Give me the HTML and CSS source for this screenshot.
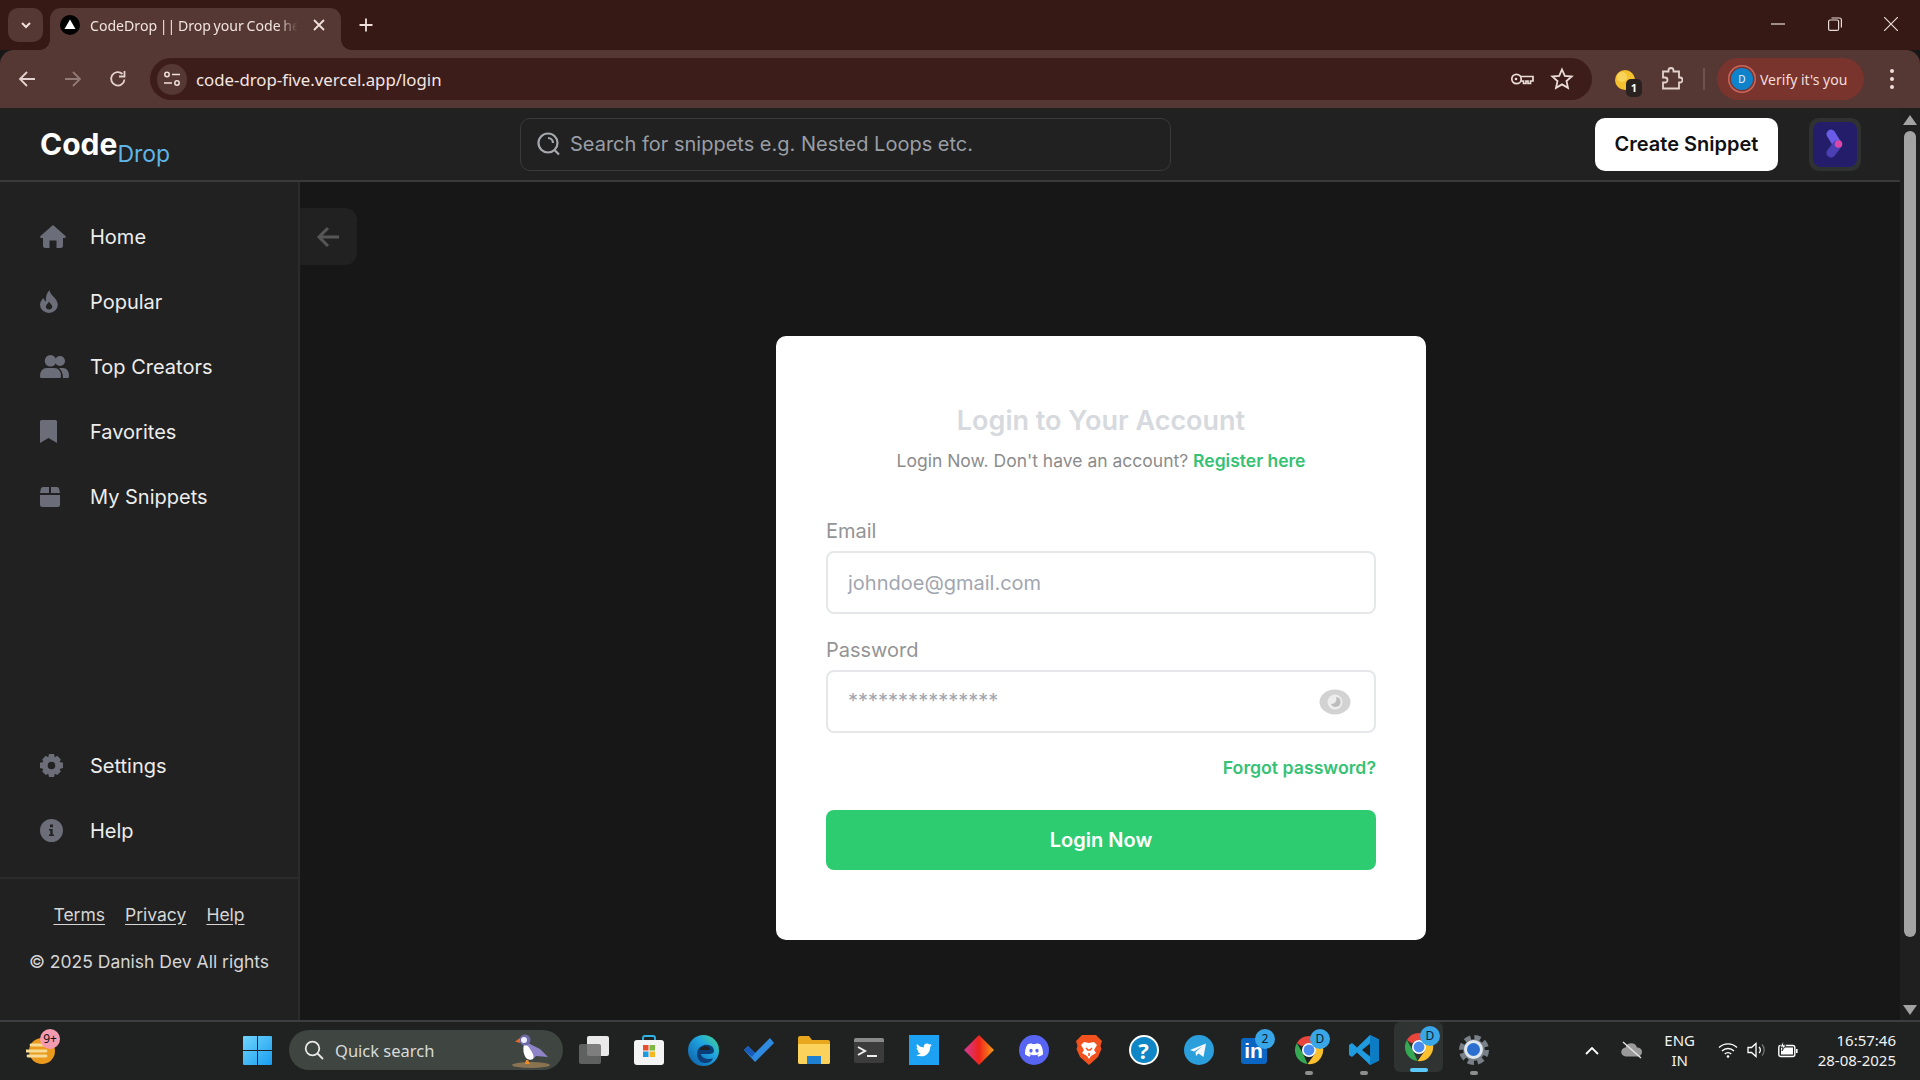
FILE: index.html
```html
<!DOCTYPE html>
<html lang="en">
<head>
<meta charset="utf-8">
<title>CodeDrop || Drop your Code here</title>
<link rel="stylesheet" href="styles.css">
</head>
<body>
<svg class="defs" width="0" height="0" aria-hidden="true">
  <defs>
    <symbol id="chrome" viewBox="0 0 32 32">
      <path d="M16 1A15 15 0 0 1 29 8.500L16 8.500L8 12L3 8.500A15 15 0 0 1 16 1Z" fill="#e8453c"/>
      <path d="M3 8.500L9.500 19.800L14.500 31A15 15 0 0 1 3 8.500Z" fill="#34a853"/>
      <path d="M29 8.500A15 15 0 0 1 14.500 31L22.500 19.800L23 11Z" fill="#fbc02d"/>
      <circle cx="16" cy="16" r="7.500" fill="#fff"/>
      <circle cx="16" cy="16" r="5.800" fill="#4a8cf0"/>
    </symbol>
    <symbol id="gearshape" viewBox="0 0 32 32">
      <circle cx="16" cy="16" r="11.500"/>
      <circle cx="16" cy="16" r="13.500" fill="none" stroke="currentColor" stroke-width="5" stroke-dasharray="6.600 4"/>
    </symbol>
  </defs>
</svg>

<header class="tabstrip">
  <button class="tab-search"><svg width="14" height="14" viewBox="0 0 14 14"><path d="M3 5l4 4 4-4" fill="none" stroke="#f0e0dc" stroke-width="2"/></svg></button>
  <div class="tab">
    <svg class="favicon" width="20" height="20" viewBox="0 0 20 20"><circle cx="10" cy="10" r="10" fill="#000"/><path d="M10 4.500L15.500 14H4.500Z" fill="#fff"/></svg>
    <span class="tab-title">CodeDrop || Drop your Code he</span>
    <svg class="tab-close" width="14" height="14" viewBox="0 0 14 14"><path d="M2 2l10 10M12 2L2 12" stroke="#f0e0dc" stroke-width="1.800"/></svg>
  </div>
  <svg class="new-tab" width="16" height="16" viewBox="0 0 16 16"><path d="M8 1.500v13M1.500 8h13" stroke="#f0e0dc" stroke-width="1.800"/></svg>
  <div class="window-controls">
    <svg width="14" height="14" viewBox="0 0 14 14"><path d="M0 7h14" stroke="#e8dcd8" stroke-width="1.200"/></svg>
    <svg width="14" height="14" viewBox="0 0 14 14"><rect x=".6" y="3" width="10" height="10.400" rx="1.500" fill="none" stroke="#e8dcd8" stroke-width="1.200"/><path d="M3.500 1H11.500Q13.400 1 13.400 3V10.500" fill="none" stroke="#e8dcd8" stroke-width="1.200"/></svg>
    <svg width="14" height="14" viewBox="0 0 14 14"><path d="M0 0l14 14M14 0L0 14" stroke="#e8dcd8" stroke-width="1.200"/></svg>
  </div>
</header>

<nav class="toolbar">
  <div class="nav-buttons">
    <svg width="18" height="18" viewBox="0 0 18 18"><path d="M17 9H2M9 2L2 9l7 7" fill="none" stroke="#e4d2ce" stroke-width="1.800"/></svg>
    <svg width="18" height="18" viewBox="0 0 18 18"><path d="M1 9h15M9 2l7 7-7 7" fill="none" stroke="#927a76" stroke-width="1.800"/></svg>
    <svg width="18" height="18" viewBox="0 0 18 18"><path d="M15.500 9.500A6.700 6.700 0 1 1 13.500 4" fill="none" stroke="#e4d2ce" stroke-width="1.800"/><path d="M15.500 1v5.500H10" fill="none" stroke="#e4d2ce" stroke-width="1.800"/></svg>
  </div>
  <div class="address">
    <span class="site-info"><svg width="18" height="18" viewBox="0 0 18 18"><g fill="none" stroke="#f0e0dc" stroke-width="1.500"><circle cx="4" cy="4.500" r="2.200"/><path d="M9 4.500h8M1 13h8"/><circle cx="14" cy="13" r="2.200"/></g></svg></span>
    <span class="url">code-drop-five.vercel.app/login</span>
    <svg class="addr-icon" width="24" height="24" viewBox="0 0 24 24"><g fill="none" stroke="#ecdcd8" stroke-width="1.700"><circle cx="6.500" cy="12" r="4.700"/><path d="M11 9.500h12v4.500h-2.500v2.500h-2.500v-2.500h-2v2.500h-2.500v-2.500H11"/></g><circle cx="6" cy="12" r="1.300" fill="#ecdcd8"/></svg>
    <svg class="addr-icon" width="24" height="24" viewBox="0 0 24 24"><path d="M12 2.500l2.800 6.300 6.900.7-5.200 4.600 1.500 6.800-6-3.500-6 3.500 1.500-6.800-5.200-4.600 6.900-.7Z" fill="none" stroke="#ecdcd8" stroke-width="1.800"/></svg>
  </div>
  <div class="ext ext-first">
    <svg width="34" height="36" viewBox="0 0 34 36"><circle cx="17" cy="19" r="10" fill="#f5c12e"/><circle cx="14" cy="16" r="5" fill="#f9d45a"/></svg>
    <span class="ext-badge">1</span>
  </div>
  <div class="ext">
    <svg width="24" height="24" viewBox="0 0 24 24"><path d="M4 4.500h5.500V3.500a2.500 2.500 0 0 1 5 0v1H20v6h1a2.500 2.500 0 0 1 0 5h-1v6H4v-6h2a2.500 2.500 0 0 0 0-5H4Z" fill="none" stroke="#e4d2ce" stroke-width="1.800"/></svg>
  </div>
  <span class="toolbar-sep"></span>
  <div class="verify">
    <span class="verify-avatar">D</span>
    <span>Verify it's you</span>
  </div>
  <div class="menu-dots"><i></i><i></i><i></i></div>
</nav>

<div class="viewport">
  <div class="page">
    <header class="site-header">
      <a class="logo"><b>Code</b><span>Drop</span></a>
      <div class="search">
        <svg width="26" height="26" viewBox="0 0 26 26"><circle cx="12" cy="12" r="9.500" fill="none" stroke="#a5a9ad" stroke-width="2.200"/><path d="M12 7a5 5 0 0 1 5 5M18.500 19l4.500 4.500" fill="none" stroke="#a5a9ad" stroke-width="2.200"/></svg>
        <span>Search for snippets e.g. Nested Loops etc.</span>
      </div>
      <button class="create">Create Snippet</button>
      <div class="avatar-frame">
        <div class="avatar">
          <svg width="20" height="30" viewBox="0 0 20 30"><path d="M6 5l6 10" stroke="#6a5ce6" stroke-width="9" stroke-linecap="round"/><path d="M12 16L6 24" stroke="#4b3fb4" stroke-width="9" stroke-linecap="round"/><circle cx="13.500" cy="15" r="3.800" fill="#d948a8"/></svg>
        </div>
      </div>
    </header>
    <div class="body-row">
      <aside class="sidebar">
        <ul class="side-nav">
          <li><span class="side-icon"><svg width="26" height="23" viewBox="0 0 26 23"><path d="M13 0L25.500 11Q26.500 13 24.500 13H23V20.500Q23 23 20.500 23H16.500V15.500H9.500V23H5.500Q3 23 3 20.500V13H1.500Q-.5 13 .5 11Z"/></svg></span>Home</li>
          <li><span class="side-icon"><svg width="18" height="23" viewBox="0 0 18 23"><path fill-rule="evenodd" d="M9.500 0C10 4 13 5.500 15.500 9C17 11 17.800 13 17.800 14.800A8.900 8.200 0 0 1 0 14.800C0 12 1.800 9.500 3.500 8C4 9.800 5 11 6 11.500C5.500 7 6.500 3 9.500 0ZM9 11.500C8 13.500 5.800 14.800 5.800 16.800A3.300 3.300 0 0 0 12.300 16.800C12.300 14.800 10 13.500 9 11.500Z"/></svg></span>Popular</li>
          <li><span class="side-icon"><svg width="29" height="23" viewBox="0 0 29 23"><circle cx="20" cy="6" r="5"/><path d="M19 13h4Q29 13 29 21.500 29 23 27.500 23H23Q23 16.500 19 13Z"/><circle cx="10.500" cy="5.800" r="5.800"/><path d="M7 13h7Q21 13 21 21.500 21 23 19.500 23H1.500Q0 23 0 21.500 0 13 7 13Z"/></svg></span>Top Creators</li>
          <li><span class="side-icon"><svg width="17" height="23" viewBox="0 0 17 23"><path d="M0 1.500Q0 0 1.500 0H15.500Q17 0 17 1.500V23L8.500 18 0 23Z"/></svg></span>Favorites</li>
          <li><span class="side-icon"><svg width="20" height="20" viewBox="0 0 20 20"><path d="M3 0H9V6H0L.8 2Q1.400 0 3 0ZM11 0H17Q18.600 0 19.200 2L20 6H11ZM0 8H20V17.500Q20 20 17.500 20H2.500Q0 20 0 17.500Z"/></svg></span>My Snippets</li>
        </ul>
        <ul class="side-nav side-nav-bottom">
          <li><span class="side-icon"><svg width="23" height="23" viewBox="0 0 23 23"><path fill-rule="evenodd" d="M9 0H14L14.800 3.200 17.300 1.800 20.800 5.400 19.600 7.900 23 8.800V14L19.600 14.900 20.800 17.500 17.300 21.100 14.800 19.800 14 23H9L8.200 19.800 5.700 21.100 2.200 17.500 3.400 14.900 0 14V8.800L3.400 7.900 2.200 5.400 5.700 1.800 8.200 3.200ZM11.500 7.700A3.800 3.800 0 1 0 11.500 15.300 3.800 3.800 0 1 0 11.500 7.700Z"/></svg></span>Settings</li>
          <li><span class="side-icon"><svg width="23" height="23" viewBox="0 0 23 23"><path fill-rule="evenodd" d="M11.500 0A11.500 11.500 0 1 1 11.500 23 11.500 11.500 0 1 1 11.500 0ZM10 5.500V8.200H13V5.500ZM9 10V11.500H10.300V15.500H9V17H14V15.500H12.700V10Z"/></svg></span>Help</li>
        </ul>
        <footer class="side-footer">
          <div class="side-links"><a>Terms</a><a>Privacy</a><a>Help</a></div>
          <p>© 2025 Danish Dev All rights</p>
        </footer>
      </aside>
      <main class="main">
        <button class="back"><svg width="24" height="22" viewBox="0 0 24 22"><path d="M23 11H3M12 2L3 11l9 9" fill="none" stroke="#565656" stroke-width="3"/></svg></button>
        <section class="card">
          <h1>Login to Your Account</h1>
          <p class="sub">Login Now. Don't have an account? <a>Register here</a></p>
          <label class="field-label">Email</label>
          <div class="input"><span class="placeholder">johndoe@gmail.com</span></div>
          <label class="field-label field-label-pw">Password</label>
          <div class="input input-pw">
            <span class="placeholder stars">***************</span>
            <svg width="32" height="26" viewBox="0 0 32 26"><ellipse cx="16" cy="13" rx="15.500" ry="12.500" fill="#d2d2d2"/><circle cx="16" cy="13" r="7.500" fill="#ededed"/><path d="M17 8A5 5 0 1 1 12 15 5 5 0 0 0 17 8Z" fill="#bdbdbd"/></svg>
          </div>
          <a class="forgot">Forgot password?</a>
          <button class="login">Login Now</button>
        </section>
      </main>
    </div>
  </div>
  <div class="scrollbar">
    <svg width="14" height="10" viewBox="0 0 14 10"><path d="M7 0l7 10H0Z" fill="#a3a3a3"/></svg>
    <span class="thumb"></span>
    <svg width="14" height="10" viewBox="0 0 14 10"><path d="M7 10L0 0h14Z" fill="#a3a3a3"/></svg>
  </div>
</div>

<footer class="taskbar">
  <div class="weather">
    <svg width="30" height="30" viewBox="0 0 30 30"><circle cx="16" cy="16" r="13" fill="#ec9a1e"/><path d="M0 16h20M5 10h16M2 21h18" stroke="#f5dc96" stroke-width="2.800" stroke-linecap="round"/></svg>
    <span class="weather-badge">9+</span>
  </div>
  <svg class="start" width="29" height="29" viewBox="0 0 29 29">
    <defs><linearGradient id="win" x1="0" y1="0" x2="1" y2="1"><stop offset="0" stop-color="#6fd6fb"/><stop offset="1" stop-color="#1a9cf0"/></linearGradient></defs>
    <path d="M1 0H14V14H0V1Q0 0 1 0ZM15 0H28Q29 0 29 1V14H15ZM0 15H14V29H1Q0 29 0 28ZM15 15H29V28Q29 29 28 29H15Z" fill="url(#win)"/>
  </svg>
  <div class="quick">
    <svg width="20" height="20" viewBox="0 0 20 20"><circle cx="8.500" cy="8.500" r="6.800" fill="none" stroke="#e8e8e8" stroke-width="1.800"/><path d="M13.500 13.500L19 19" stroke="#e8e8e8" stroke-width="1.800"/></svg>
    <span class="quick-text">Quick search</span>
    <svg class="puffin" width="42" height="36" viewBox="0 0 42 36"><ellipse cx="22" cy="33" rx="19" ry="3" fill="#8a7350"/><path d="M17 10L31 17 39 25 27 24Q23 29 20 27 15 22 16 14Z" fill="#8f84c8"/><path d="M15 12Q13 20 17 26 20 29 24 27 26 24 21 17 19 13 15 12Z" fill="#fff"/><circle cx="16" cy="8" r="5.500" fill="#6f6aa8"/><circle cx="15" cy="8" r="3" fill="#eef"/><path d="M11 6L6 9.500 11 11Z" fill="#e86a2a"/><path d="M17 28l-1 4h5l-2-4Z" fill="#ef8a2a"/></svg>
  </div>
  <div class="apps">
    <div class="app"><svg width="30" height="30" viewBox="0 0 30 30"><rect x="8" y="1" width="22" height="20" rx="2" fill="#e9e9e9"/><rect y="9" width="22" height="20" rx="2" fill="#6b6b6b" fill-opacity=".85"/></svg></div>
    <div class="app"><svg width="30" height="30" viewBox="0 0 30 30"><path d="M9 6V3Q9 1 11 1H19Q21 1 21 3V6" fill="none" stroke="#2fb4e8" stroke-width="1.800"/><rect y="5" width="30" height="25" rx="3" fill="#f4f4f4"/><rect x="9" y="10" width="5.500" height="5.500" fill="#e74f2c"/><rect x="15.500" y="10" width="5.500" height="5.500" fill="#7db842"/><rect x="9" y="16.500" width="5.500" height="5.500" fill="#1e9ae0"/><rect x="15.500" y="16.500" width="5.500" height="5.500" fill="#f5b922"/></svg></div>
    <div class="app"><svg width="31" height="31" viewBox="0 0 31 31"><defs><linearGradient id="edge" x1="0" y1="1" x2="1" y2="0"><stop offset="0" stop-color="#0c59a4"/><stop offset=".6" stop-color="#1fa4e0"/><stop offset="1" stop-color="#4ad98a"/></linearGradient></defs><circle cx="15.500" cy="15.500" r="15.500" fill="url(#edge)"/><path d="M16 10C22 9 26 12 26 16 26 18 24 19 21 19H13C13 22 17 24 21 24L25 23.500C23 28 17 29 13 27 8 24 8 15 12 12Z" fill="#0b3e78"/><path d="M12 14Q14 11 18 11 22 12 22 15H12Z" fill="#222"/></svg></div>
    <div class="app"><svg width="30" height="26" viewBox="0 0 30 26"><path d="M0 13L4 9 11 16 26 1 30 6 11 25Z" fill="#2e8be0"/><path d="M0 13L4 9 11 16 8 20Z" fill="#185ab8"/></svg></div>
    <div class="app"><svg width="32" height="28" viewBox="0 0 32 28"><path d="M0 2Q0 0 2 0H11L14 4H30Q32 4 32 6V26Q32 28 30 28H2Q0 28 0 26Z" fill="#e8a81e"/><path d="M0 8H32V26Q32 28 30 28H2Q0 28 0 26Z" fill="#fbd35c"/><rect x="9" y="20" width="14" height="8" fill="#1f7fd0"/></svg></div>
    <div class="app"><svg width="30" height="25" viewBox="0 0 30 25"><rect width="30" height="25" rx="2" fill="#3c3c3c"/><path d="M0 2Q0 0 2 0H28Q30 0 30 2V4H0Z" fill="#8a8a8a"/><path d="M4 9l7 4-7 4" fill="none" stroke="#eee" stroke-width="2"/><path d="M13 18h10" stroke="#eee" stroke-width="2"/></svg></div>
    <div class="app"><svg width="30" height="30" viewBox="0 0 30 30"><rect width="30" height="30" fill="#1da1f2"/><path transform="translate(7 7) scale(.66)" d="M23.950 4.570a10 10 0 0 1-2.820.77 4.960 4.960 0 0 0 2.160-2.720c-.950.550-2 .950-3.120 1.170a4.920 4.920 0 0 0-8.380 4.480C7.690 8.090 4.070 6.130 1.640 3.160a4.820 4.820 0 0 0-.670 2.480c0 1.710.870 3.210 2.190 4.100a4.900 4.900 0 0 1-2.230-.620v.060c0 2.390 1.700 4.380 3.950 4.830a4.900 4.900 0 0 1-2.210.080 4.930 4.930 0 0 0 4.600 3.420A9.870 9.870 0 0 1 0 19.540a14 14 0 0 0 7.560 2.210c9.050 0 14-7.500 14-13.980 0-.210 0-.420-.020-.630a9.940 9.940 0 0 0 2.460-2.550z" fill="#fff"/></svg></div>
    <div class="app"><svg width="30" height="30" viewBox="0 0 30 30"><defs><linearGradient id="dia" x1="0" y1="0" x2="1" y2="0"><stop offset="0" stop-color="#d03a9a"/><stop offset=".5" stop-color="#f0241c"/><stop offset="1" stop-color="#f69a18"/></linearGradient></defs><path d="M15 0L30 15 15 30 0 15Z" fill="url(#dia)"/></svg></div>
    <div class="app"><svg width="30" height="30" viewBox="0 0 30 30"><circle cx="15" cy="15" r="15" fill="#5865f2"/><path transform="translate(6 6) scale(.75)" d="M20.317 4.370a19.791 19.791 0 0 0-4.885-1.515.074.074 0 0 0-.079.037c-.21.375-.444.864-.608 1.250a18.270 18.270 0 0 0-5.487 0 12.640 12.640 0 0 0-.617-1.250.077.077 0 0 0-.079-.037A19.736 19.736 0 0 0 3.677 4.370a.07.07 0 0 0-.032.027C.533 9.046-.32 13.580.099 18.057a.082.082 0 0 0 .031.057 19.900 19.900 0 0 0 5.993 3.030.078.078 0 0 0 .084-.028c.462-.63.874-1.295 1.226-1.994a.076.076 0 0 0-.041-.106 13.107 13.107 0 0 1-1.872-.892.077.077 0 0 1-.008-.128 10.200 10.200 0 0 0 .372-.292.074.074 0 0 1 .077-.01c3.928 1.793 8.180 1.793 12.062 0a.074.074 0 0 1 .078.01c.12.098.246.198.373.292a.077.077 0 0 1-.006.127 12.299 12.299 0 0 1-1.873.892.077.077 0 0 0-.041.107c.36.698.772 1.362 1.225 1.993a.076.076 0 0 0 .084.028 19.839 19.839 0 0 0 6.002-3.030.077.077 0 0 0 .032-.054c.5-5.177-.838-9.674-3.549-13.660a.061.061 0 0 0-.031-.03zM8.020 15.330c-1.183 0-2.157-1.085-2.157-2.419 0-1.333.956-2.419 2.157-2.419 1.210 0 2.176 1.096 2.157 2.420 0 1.333-.956 2.418-2.157 2.418zm7.975 0c-1.183 0-2.157-1.085-2.157-2.419 0-1.333.955-2.419 2.157-2.419 1.210 0 2.176 1.096 2.157 2.420 0 1.333-.946 2.418-2.157 2.418z" fill="#fff"/></svg></div>
    <div class="app"><svg width="26" height="30" viewBox="0 0 26 30"><path d="M6 0H20L23 3 26 6 24.500 11 25.500 14 22 22 13 30 4 22 .5 14 1.500 11 0 6 3 3Z" fill="#f1521e"/><path d="M8 7L13 8 18 7 21 10 18 15 20 18 15 21 13 24 11 21 6 18 8 15 5 10Z" fill="#fff"/><path d="M10 13L12 15H14L16 13M13 18v3" stroke="#f1521e" stroke-width="1.500" fill="none"/></svg></div>
    <div class="app"><span class="help-icon">?</span></div>
    <div class="app"><svg width="30" height="30" viewBox="0 0 30 30"><circle cx="15" cy="15" r="15" fill="#2b9fdc"/><path d="M6 15L22 8.500 19.500 22 14.500 18.500 12 21 11.500 17 18 11.500 10 16.500Z" fill="#f2f8fc"/></svg></div>
    <div class="app"><span class="linkedin">in</span><span class="badge">2</span></div>
    <div class="app"><svg width="30" height="30"><use href="#chrome"/></svg><span class="badge">D</span><i class="run"></i></div>
    <div class="app"><svg width="30" height="30" viewBox="0 0 30 30"><path d="M21 0L30 4.500V25.500L21 30 8 17.500 3 22 0 20V10L3 8 8 12.500ZM21 8.500L13 15 21 21.500Z" fill="#1f9be0"/><path d="M21 0L30 4.500V25.500L21 30Z" fill="#0c7cc4"/></svg><i class="run"></i></div>
    <div class="app app-active"><svg width="30" height="30"><use href="#chrome"/></svg><span class="badge">D</span><i class="run run-active"></i></div>
    <div class="app app-gear"><svg width="30" height="30"><use href="#gearshape"/></svg><span class="gear-core"></span><i class="run"></i></div>
  </div>
  <div class="tray">
    <svg class="tray-chevron" width="14" height="9" viewBox="0 0 14 9"><path d="M1 8l6-6 6 6" fill="none" stroke="#fff" stroke-width="1.800"/></svg>
    <svg class="tray-cloud" width="22" height="18" viewBox="0 0 22 18"><path d="M5 15.500A4.500 4.500 0 0 1 4.500 6.500 6 6 0 0 1 16 6.500 4.500 4.500 0 0 1 17 15.500Z" fill="#9a9a9a"/><path d="M2 1l18 16" stroke="#e8e8e8" stroke-width="1.400"/></svg>
    <div class="lang"><span>ENG</span><span>IN</span></div>
    <svg class="tray-wifi" width="20" height="16" viewBox="0 0 20 16"><path d="M1 5.500a13 13 0 0 1 18 0M4 9a8.500 8.500 0 0 1 12 0M6.800 12a4.500 4.500 0 0 1 6.400 0" fill="none" stroke="#fff" stroke-width="1.400"/><circle cx="10" cy="14.500" r="1.300" fill="#fff"/></svg>
    <svg class="tray-vol" width="20" height="18" viewBox="0 0 20 18"><path d="M1 6.500H4.500L9 2.500V15.500L4.500 11.500H1Z" fill="none" stroke="#fff" stroke-width="1.300"/><path d="M12 6a4 4 0 0 1 0 6" fill="none" stroke="#fff" stroke-width="1.300"/><path d="M15 3.500a8 8 0 0 1 0 11" fill="none" stroke="#777" stroke-width="1.200"/></svg>
    <svg class="tray-batt" width="20" height="18" viewBox="0 0 20 18"><rect x=".8" y="4.500" width="16" height="11" rx="2" fill="none" stroke="#fff" stroke-width="1.400"/><rect x="3" y="6.500" width="12" height="7" fill="#fff"/><rect x="18" y="8" width="1.600" height="4" fill="#fff"/><path d="M5.500 0L2 6H5L4 10 8 4H5.500Z" fill="#fff" stroke="#222" stroke-width=".8"/></svg>
    <div class="clock"><span>16:57:46</span><span>28-08-2025</span></div>
  </div>
</footer>
</body>
</html>
```
FILE: styles.css
```css
* { box-sizing: border-box; }
html, body { margin: 0; height: 100%; }
body {
  display: flex;
  flex-direction: column;
  width: 1920px;
  height: 1080px;
  overflow: hidden;
  background: #171717;
  font-family: Inter, "Liberation Sans", sans-serif;
}
button { font-family: inherit; border: 0; padding: 0; }
ul { list-style: none; margin: 0; padding: 0; }
.defs { position: absolute; }

/* Browser chrome */
.tabstrip {
  flex: none;
  height: 50px;
  display: flex;
  align-items: flex-start;
  padding: 8px 0 0 8px;
  background: #361814;
}
.tab-search {
  width: 35px;
  height: 34px;
  margin-right: 7px;
  display: flex;
  align-items: center;
  justify-content: center;
  border-radius: 10px;
  background: #553733;
}
.tab {
  position: relative;
  width: 291px;
  height: 42px;
  display: flex;
  align-items: center;
  padding: 0 14px 8px 10px;
  margin-right: 17px;
  border-radius: 11px 11px 0 0;
  background: #553733;
}
.tab::before, .tab::after {
  content: "";
  position: absolute;
  bottom: 0;
  width: 10px;
  height: 10px;
}
.tab::before { left: -10px; background: radial-gradient(circle at 0 0, transparent 9.500px, #553733 10px); }
.tab::after { right: -10px; background: radial-gradient(circle at 100% 0, transparent 9.500px, #553733 10px); }
.favicon { flex: none; margin-right: 10px; }
.tab-title {
  width: 214px;
  white-space: nowrap;
  font: 14.100px "Noto Sans", sans-serif;
  word-spacing: -1px;
  color: #f0e4e0;
  -webkit-mask-image: linear-gradient(90deg, #000 188px, transparent 208px);
  mask-image: linear-gradient(90deg, #000 188px, transparent 208px);
}
.tab-close { flex: none; margin-left: 8px; }
.new-tab { margin-top: 9px; }
.window-controls {
  margin-left: auto;
  display: flex;
  gap: 42.500px;
  padding: 9px 22px 0 0;
}
.toolbar {
  flex: none;
  height: 58px;
  display: flex;
  align-items: center;
  background: #553733;
  border-radius: 14px 14px 0 0;
}
.nav-buttons {
  display: flex;
  width: 145px;
  padding-left: 18px;
  gap: 27.500px;
}
.address {
  width: 1442px;
  height: 42px;
  margin-left: 5px;
  display: flex;
  align-items: center;
  padding: 0 18px 0 7px;
  border-radius: 21px;
  background: #3c1d19;
}
.site-info {
  width: 30px;
  height: 31px;
  display: flex;
  align-items: center;
  justify-content: center;
  border-radius: 15px;
  background: #553733;
}
.url {
  margin-left: 9px;
  margin-right: auto;
  font: 16.800px "Noto Sans", sans-serif;
  color: #f3e6e2;
}
.addr-icon { margin-left: 16px; }
.ext {
  position: relative;
  width: 46px;
  height: 42px;
  display: flex;
  align-items: center;
  justify-content: center;
}
.ext-first { margin-left: 10px; }
.ext-badge {
  position: absolute;
  left: 24px;
  top: 21px;
  width: 16px;
  height: 18px;
  border-radius: 5px;
  background: #2a2221;
  color: #fff;
  font: 700 11px/18px "Noto Sans", sans-serif;
  text-align: center;
}
.toolbar-sep {
  width: 2px;
  height: 22px;
  margin: 0 12px 0 9px;
  background: #6f524e;
}
.verify {
  width: 147px;
  height: 42px;
  display: flex;
  align-items: center;
  padding-left: 14px;
  gap: 7px;
  border-radius: 21px;
  background: #7a342e;
  color: #f2dedb;
  font: 14px "Noto Sans", sans-serif;
  white-space: nowrap;
}
.verify-avatar {
  flex: none;
  width: 22px;
  height: 22px;
  border-radius: 50%;
  background: #0e83cc;
  box-shadow: 0 0 0 1.500px #7a342e, 0 0 0 3px #c9675c;
  color: #e9f4fb;
  font-size: 10px;
  line-height: 22px;
  text-align: center;
}
.menu-dots {
  flex: 1;
  display: flex;
  flex-direction: column;
  align-items: center;
  gap: 4px;
}
.menu-dots i {
  width: 4px;
  height: 4px;
  border-radius: 50%;
  background: #f0e0dc;
}

/* Page */
.viewport { flex: 1; display: flex; min-height: 0; }
.page { flex: 1; display: flex; flex-direction: column; min-width: 0; }
.site-header {
  flex: none;
  height: 74px;
  display: flex;
  align-items: center;
  padding: 0 39px 0 40px;
  background: #212121;
  border-bottom: 2px solid #3a3a3a;
}
.logo { width: 480px; display: flex; align-items: flex-end; color: #fff; white-space: nowrap; }
.logo b { font-size: 30px; font-weight: 700; line-height: 38px; }
.logo span { font-size: 23px; line-height: 28px; color: #5fb6e6; margin-bottom: -5px; }
.search {
  width: 651px;
  height: 53px;
  display: flex;
  align-items: center;
  gap: 8px;
  padding-left: 15px;
  border: 1.500px solid #3a3a3a;
  border-radius: 10px;
  color: #999ea6;
  font-size: 20px;
  white-space: nowrap;
}
.create {
  width: 183px;
  height: 53px;
  margin-left: auto;
  border-radius: 10px;
  background: #fff;
  color: #111;
  font-size: 20px;
  font-weight: 600;
}
.avatar-frame {
  width: 52px;
  height: 53px;
  margin-left: 31px;
  padding: 4px;
  border-radius: 10px;
  background: #2f3230;
}
.avatar {
  height: 100%;
  display: flex;
  align-items: center;
  justify-content: center;
  border-radius: 8px;
  background: #241e6a;
}
.body-row { flex: 1; display: flex; min-height: 0; }
.sidebar {
  flex: none;
  width: 300px;
  display: flex;
  flex-direction: column;
  padding-top: 22px;
  background: #212121;
  border-right: 2px solid #2b2b2b;
}
.side-nav li {
  height: 65px;
  display: flex;
  align-items: center;
  padding-left: 40px;
  color: #ededed;
  font-size: 20px;
}
.side-icon { width: 50px; display: flex; fill: #6b6e78; }
.side-nav-bottom { margin-top: auto; }
.side-footer {
  height: 143px;
  margin-top: 14px;
  border-top: 2px solid #2b2b2b;
  color: #d6d6d6;
  font-size: 17.500px;
  text-align: center;
}
.side-links {
  display: flex;
  justify-content: center;
  gap: 20px;
  padding: 23px 0 0 0;
  line-height: 26px;
}
.side-links a { text-decoration: underline; text-underline-offset: 3px; }
.side-footer p { margin: 21px 0 0 0; line-height: 26px; white-space: nowrap; }
.main { flex: 1; display: flex; flex-direction: column; align-items: center; padding-top: 26px; }
.back {
  align-self: flex-start;
  width: 57px;
  height: 57px;
  display: flex;
  align-items: center;
  justify-content: center;
  padding-right: 2px;
  border-radius: 0 12px 12px 0;
  background: #212121;
}
.card {
  width: 650px;
  height: 604px;
  margin: 71px 0 0 2px;
  padding: 67px 50px 0;
  border-radius: 10px;
  background: #fff;
  display: flex;
  flex-direction: column;
}
.card h1 {
  margin: 0;
  font-size: 27px;
  line-height: 36px;
  font-weight: 600;
  text-align: center;
  color: #d6d9dd;
}
.sub {
  margin: 9px 0 0;
  font-size: 17.500px;
  line-height: 26px;
  text-align: center;
  color: #8c8c8c;
}
.sub a { color: #35c274; font-weight: 600; }
.field-label {
  margin-top: 44px;
  font-size: 20px;
  line-height: 26px;
  color: #949494;
}
.field-label-pw { margin-top: 23px; }
.input {
  height: 63px;
  margin-top: 7px;
  display: flex;
  align-items: center;
  padding: 0 20px;
  border: 2px solid #e5e7eb;
  border-radius: 8px;
}
.placeholder { font-size: 20px; color: #a2a6af; }
.input-pw { justify-content: space-between; padding-right: 23px; }
.stars { margin-top: -1px; }
.forgot {
  align-self: flex-end;
  margin-top: 22px;
  font-size: 17.700px;
  line-height: 26px;
  font-weight: 600;
  color: #35c274;
}
.login {
  height: 60px;
  margin-top: 29px;
  border-radius: 8px;
  background: #2ecc71;
  color: #fff;
  font-size: 20px;
  font-weight: 600;
}
.scrollbar {
  flex: none;
  width: 20px;
  display: flex;
  flex-direction: column;
  align-items: center;
  padding: 7px 0 5px;
  background: #1f1f1f;
}
.thumb {
  width: 12px;
  height: 806px;
  margin: 6px 0 auto;
  border-radius: 6px;
  background: #a3a3a3;
}

/* Taskbar */
.taskbar {
  flex: none;
  height: 60px;
  display: flex;
  align-items: center;
  padding-bottom: 2px;
  background: #1f2221;
  border-top: 2px solid #3b3f3f;
  color: #f2f2f2;
  font-family: "Noto Sans", sans-serif;
}
.weather { position: relative; width: 243px; height: 30px; padding-left: 26px; }
.weather-badge {
  position: absolute;
  left: 40px;
  top: -6px;
  width: 20px;
  height: 20px;
  border-radius: 50%;
  background: #f59bb0;
  color: #111;
  font-size: 12px;
  line-height: 20px;
  text-align: center;
}
.start { flex: none; }
.quick {
  width: 274px;
  height: 40px;
  margin-left: 17px;
  display: flex;
  align-items: center;
  padding-left: 15px;
  border-radius: 20px;
  background: #3f4541;
  color: #d8dbd9;
  font-size: 16.500px;
}
.quick-text { margin-left: 11px; }
.puffin { margin: 0 0 0 auto; transform: translate(-12px, 0); }
.apps { display: flex; margin-left: 3px; }
.app {
  position: relative;
  width: 55px;
  height: 56px;
  display: flex;
  align-items: center;
  justify-content: center;
}
.badge {
  position: absolute;
  right: 6px;
  top: 7px;
  width: 20px;
  height: 20px;
  border-radius: 50%;
  background: #39a6e8;
  color: #10222e;
  font-size: 12px;
  line-height: 20px;
  text-align: center;
}
.help-icon {
  width: 30px;
  height: 30px;
  border-radius: 50%;
  border: 2px solid #fff;
  background: #0f86c6;
  color: #fff;
  font-size: 22px;
  font-weight: 700;
  line-height: 26px;
  text-align: center;
}
.linkedin {
  width: 26px;
  height: 26px;
  margin-top: 2px;
  border-radius: 3px;
  background: #0a66c2;
  color: #fff;
  font: 700 21px/26px "Liberation Sans", sans-serif;
  text-align: center;
}
.run {
  position: absolute;
  left: 50%;
  bottom: 3px;
  width: 8px;
  height: 4px;
  margin-left: -4px;
  border-radius: 2px;
  background: #8e8e8e;
}
.app-active {
  width: 49px;
  height: 50px;
  margin: 0 3px;
  border-radius: 6px;
  background: #2f3332;
}
.app-active .badge { right: 3px; top: 4px; }
.app-active .run-active { width: 18px; margin-left: -9px; bottom: 0; background: #5cc8f8; }
.app-gear { color: #7a8088; fill: #7a8088; }
.gear-core {
  position: absolute;
  left: 18px;
  top: 18px;
  width: 19px;
  height: 19px;
  border-radius: 50%;
  border: 3px solid #dfe6ee;
  background: #2a6fd0;
}
.tray {
  margin-left: auto;
  display: flex;
  align-items: center;
  padding-right: 24px;
}
.tray-chevron { margin-right: 22px; }
.tray-cloud { margin-right: 18px; }
.lang, .clock {
  display: flex;
  flex-direction: column;
  gap: 1px;
  font-size: 15px;
  line-height: 19px;
}
.lang { align-items: center; width: 38px; margin-right: 19px; }
.clock { align-items: flex-end; margin-left: 20px; }
.tray-wifi { margin-right: 9px; }
.tray-vol { margin-right: 11px; }
```
